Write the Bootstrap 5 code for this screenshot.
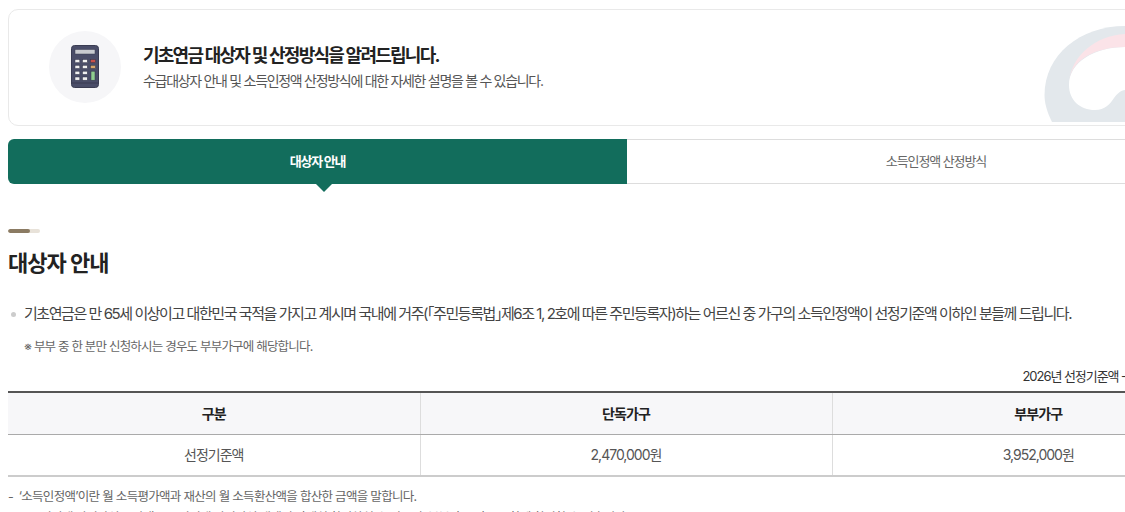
<!DOCTYPE html>
<html lang="ko">
<head>
<meta charset="utf-8">
<title>기초연금 대상자</title>
<link href="https://cdn.jsdelivr.net/npm/bootstrap@5.3.0/dist/css/bootstrap.min.css" rel="stylesheet">
<style>
html,body{overflow:hidden;height:512px;background:#fff}
body{font-family:Inter,"Noto Sans CJK KR","Noto Sans",sans-serif;letter-spacing:-.05em;color:#333;width:1125px}
.page-wrap{width:1238px;margin-left:8px;padding-top:9px}
.hero-box{height:117px;border:1px solid #e9e9e9;border-radius:10px;padding:0 0 0 40px;position:relative;overflow:hidden}
.hero-ico{width:72px;height:72px;border-radius:50%;background:#f6f6f8;flex:none;margin-right:22px;margin-top:-2px}
.hero-title{font-size:18px;font-weight:700;color:#222;line-height:26px;margin:0;letter-spacing:-1.75px}
.hero-sub{font-size:14px;color:#555;line-height:24px;margin:0;letter-spacing:-1.3px}
.hero-deco{position:absolute;left:1031px;top:10px}
.tabs-row{margin-top:13px;height:45px}
.tab-on{width:619px;background:#126d5c;color:#fff;font-size:13px;font-weight:700;border-radius:6px 0 0 6px;position:relative;letter-spacing:-1.2px}
.tab-on::after{content:"";position:absolute;left:50%;top:100%;margin-left:-2px;border:8px solid transparent;border-top-color:#126d5c;border-bottom:0}
.tab-off{width:619px;border:1px solid #ddd;border-left:0;color:#666;font-size:13px;letter-spacing:-1.1px}
.sec-bar{margin-top:45px;width:32px;height:4px;border-radius:2px;background:#e8e2d9;overflow:hidden}
.sec-bar span{display:block;width:22px;height:4px;border-radius:2px;background:#8b7b63}
.sec-title{font-size:22px;font-weight:700;color:#222;line-height:32px;margin:14px 0 0;letter-spacing:-1px}
.bul-line{font-size:15px;line-height:24px;color:#444;margin:23px 0 0;padding-left:16px;position:relative;letter-spacing:-1.44px}
.bul-line::before{content:"";position:absolute;left:3px;top:10px;width:5px;height:5px;border-radius:50%;background:#ccc}
.note-line{font-size:12.5px;color:#666;line-height:20px;margin:11px 0 0 16px;letter-spacing:-.8px}
.unit-line{font-size:13px;color:#333;line-height:20px;margin:9px 0 0;width:1117px;text-align:right;white-space:nowrap;letter-spacing:-1.05px}
.unit-line span{margin-right:-1px}
.amt-table{width:1236px;table-layout:fixed;border-collapse:collapse;margin:5px 0 0;border-top:2px solid #555;border-bottom:2px solid #ccc}
.amt-table th{height:42px;background:#f7f7f9;font-size:14px;font-weight:700;color:#222;text-align:center;padding:0;border-bottom:1px solid #aaa;border-left:1px solid #ddd;letter-spacing:-.9px}
.amt-table td{height:42px;font-size:14px;color:#555;text-align:center;padding:0;border-left:1px solid #ddd;letter-spacing:-1px}
.amt-table th:first-child,.amt-table td:first-child{border-left:0}
.foot-line{font-size:12.5px;color:#666;line-height:20px;margin:10px 0 0;letter-spacing:-.7px}
.foot-line2{font-size:12.5px;color:#666;line-height:20px;margin:1px 0 0;letter-spacing:-.7px;white-space:nowrap}
</style>
</head>
<body>
<div class="page-wrap">
  <div class="hero-box d-flex align-items-center">
    <div class="hero-ico d-flex align-items-center justify-content-center">
      <svg width="28" height="43" viewBox="0 0 28 43">
        <rect x=".5" y=".5" width="27" height="42" rx="3" fill="#4a4d68" stroke="#3a3c52"/>
        <path d="M1 38H27" stroke="#3a3c52"/>
        <rect x="4" y="4.500" width="20" height="4.500" fill="#c9cbd0" stroke="#3a3c52" stroke-width=".5"/>
        <g fill="#f0f0f0" stroke="#33354a" stroke-width=".5"><rect x="4" y="14.500" width="4.800" height="3.200"/><rect x="11.500" y="14.500" width="4.800" height="3.200"/><rect x="4" y="20.300" width="4.800" height="3.200"/><rect x="11.500" y="20.300" width="4.800" height="3.200"/><rect x="4" y="26.200" width="4.800" height="3.200"/><rect x="11.500" y="26.200" width="4.800" height="3.200"/><rect x="4" y="32" width="4.800" height="3.200"/><rect x="11.500" y="32" width="4.800" height="3.200"/></g>
        <rect x="19.500" y="14.500" width="5" height="3.200" fill="#c9504a" stroke="#33354a" stroke-width=".5"/>
        <rect x="19.500" y="20.300" width="5" height="3.200" fill="#d9a66a" stroke="#33354a" stroke-width=".5"/>
        <rect x="20" y="26.200" width="4" height="9" fill="#8fce8f" stroke="#33354a" stroke-width=".5"/>
      </svg>
    </div>
    <div>
      <p class="hero-title">기초연금 대상자 및 산정방식을 알려드립니다.</p>
      <p class="hero-sub">수급대상자 안내 및 소득인정액 산정방식에 대한 자세한 설명을 볼 수 있습니다.</p>
    </div>
    <svg class="hero-deco" width="85" height="102" viewBox="1040 20 85 102">
      <path d="M1052 122C1047 112 1044.500 103 1044.500 95C1044.500 55 1080 26 1125 26V122Z" fill="#e3e8ec"/>
      <path d="M1125 47C1095 47 1069 62 1069 85C1069 100 1080 110 1095 110C1105 110 1110 104 1114 98C1117 94 1121 90 1125 90Z" fill="#fff"/>
      <path d="M1125 34C1095 36 1072 55 1069 82C1071 60 1095 47 1125 47Z" fill="#fbe3e8"/>
    </svg>
  </div>
  <div class="tabs-row d-flex">
    <div class="tab-on d-flex align-items-center justify-content-center">대상자 안내</div>
    <div class="tab-off d-flex align-items-center justify-content-center">소득인정액 산정방식</div>
  </div>
  <div class="sec-bar"><span></span></div>
  <h2 class="sec-title">대상자 안내</h2>
  <p class="bul-line text-nowrap">기초연금은 만 65세 이상이고 대한민국 국적을 가지고 계시며 국내에 거주(｢주민등록법｣제6조 1, 2호에 따른 주민등록자)하는 어르신 중 가구의 소득인정액이 선정기준액 이하인 분들께 드립니다.</p>
  <p class="note-line">※ 부부 중 한 분만 신청하시는 경우도 부부가구에 해당합니다.</p>
  <p class="unit-line"><span>2026년 선정기준액 -</span></p>
  <table class="amt-table">
    <thead><tr><th>구분</th><th>단독가구</th><th>부부가구</th></tr></thead>
    <tbody><tr><td>선정기준액</td><td>2,470,000원</td><td>3,952,000원</td></tr></tbody>
  </table>
  <p class="foot-line">-&nbsp; ‘소득인정액’이란 월 소득평가액과 재산의 월 소득환산액을 합산한 금액을 말합니다.</p>
  <p class="foot-line2">-&nbsp; 소득인정액 산정방식은 아래 소득인정액 산정방식 탭에서 자세히 확인하실 수 있으며, 부부가구 기준도 함께 확인할 수 있습니다.</p>
</div>
<script src="https://cdn.jsdelivr.net/npm/bootstrap@5.3.0/dist/js/bootstrap.bundle.min.js"></script>
</body>
</html>
